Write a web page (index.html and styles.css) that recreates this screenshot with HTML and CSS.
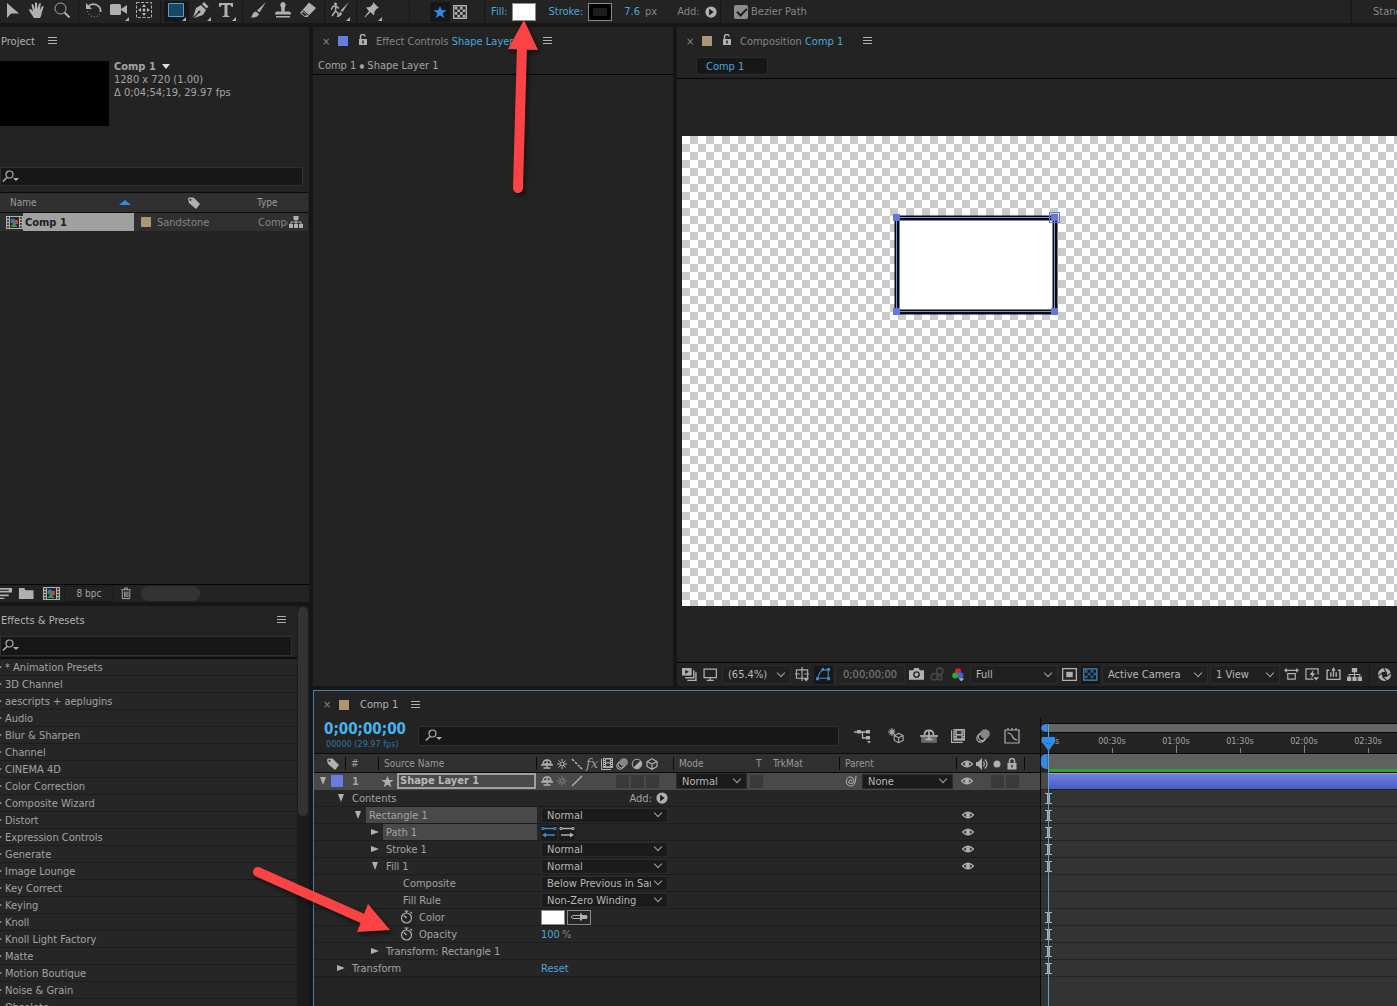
FILE: index.html
```html
<!DOCTYPE html>
<html lang="en">
<head>
<meta charset="utf-8">
<title>Comp 1</title>
<link rel="stylesheet" href="styles.css">
</head>
<body>
<svg class="defs" aria-hidden="true">
  <symbol id="i-select" viewBox="0 0 16 16"><path d="M3 1v15l4-4.500h8z"/></symbol>
  <symbol id="i-hand" viewBox="0 0 16 16"><path d="M5 16 1 10 0 7.500q1-1.200 2.200 0L4 9.500 2.500 3q.6-1.600 1.900-.3L6 7.500 6 1q1-1.600 2 0l.4 6L10 1.500q1.200-1.100 1.900.2L10.800 8l2.300-3.800q1.400-.6 1.500.8L13 10l-1 4-1 2z"/></symbol>
  <symbol id="i-zoom" viewBox="0 0 16 16"><circle cx="6.500" cy="6.500" r="5.500" class="line"/><path d="m10.500 10.500 5 5" class="line" stroke-width="2"/></symbol>
  <symbol id="i-rotate" viewBox="0 0 16 16"><path d="M2 5a7 7 0 0 1 12.500 5" class="line" stroke-width="1.800"/><path d="M14 12a7 7 0 0 1-12.500-3" class="line" stroke-dasharray="1 2"/><path d="M0 1v6h6z"/></symbol>
  <symbol id="i-camera" viewBox="0 0 18 16"><rect y="2" width="11" height="11" rx="1.500"/><path d="m11 7 6-4v9l-6-4z"/></symbol>
  <symbol id="i-pan" viewBox="0 0 16 16"><path d="M.5.5h15v15H.5z" class="line" stroke-dasharray="3 1.500"/><path d="M8 2 6 5h4zM8 14l-2-3h4zM2 8l3-2v4zM14 8l-3-2v4z"/><circle cx="8" cy="8" r="1.500"/></symbol>
  <symbol id="i-rect" viewBox="0 0 16 16"><path d="M.5 1.500h15v13H.5z" fill="#1a4763" stroke="#4f9fd2"/></symbol>
  <symbol id="i-pen" viewBox="0 0 16 16"><path d="M0 15.500 3 6l5-3 5 5-3 5-9 3 5-5a1.200 1.200 0 1 0-1-1zM9 2l2-2 4.500 4.500-2 2z"/></symbol>
  <symbol id="i-text" viewBox="0 0 16 16"><path d="M1 1h14v4h-1.500q-.2-2-2-2H9.500v10q0 1 2 1V15h-7v-1q2 0 2-1V3h-2q-1.800 0-2 2H1z"/></symbol>
  <symbol id="i-brush" viewBox="0 0 16 16"><path d="M16 0 9.500 10.500 7 8.500zM6 9.500l3 2.500q-1 4-9 3.500 2-.5 2.500-3T6 9.500z"/></symbol>
  <symbol id="i-stamp" viewBox="0 0 16 16"><path d="M8 0a3 3 0 0 1 2 5l-.5 4.500H14q2 0 2 3H0q0-3 2-3h4.500L6 5a3 3 0 0 1 2-5zM1 14h14v1.500H1z"/></symbol>
  <symbol id="i-eraser" viewBox="0 0 16 16"><path d="M9 0.500 16 6 7.500 15H5L0 11z"/><path d="m3 8.500 6 5" stroke="#232323"/><path d="M1.500 11 5 14l2-1-4-3z" fill="#232323"/></symbol>
  <symbol id="i-roto" viewBox="0 0 18 16"><circle cx="4.500" cy="2" r="1.500"/><path d="M0 8l2-3.500 3-.5 3 2.500M5 4 4.500 9 7 11v4M4.500 9 1 14" class="line" stroke-width="1.500"/><path d="M18 0l-6.500 10L9.500 8.500zM9 9.500l2 2Q10 15 5 15q3-1 4-5.500z"/></symbol>
  <symbol id="i-pin" viewBox="0 0 16 16"><path d="m9 0 6 6-2 .5-2.500 3-.5 4-3.500-3.500L1 15.500.5 15 5 9 2 5.500l4-.5 3-3z"/></symbol>
  <symbol id="i-star" viewBox="0 0 16 16"><path d="m8 1 2 5h5.500L11 9.500l1.800 5.500L8 11.700 3.200 15 5 9.500.5 6H6z"/></symbol>
  <symbol id="i-checker" viewBox="0 0 16 16"><path d="M.8.8h14.400v14.400H.8z" class="line" stroke-width="1.600"/><path d="M2 2h3v3H2zM8 2h3v3H8zM5 5h3v3H5zM11 5h3v3h-3zM2 8h3v3H2zM8 8h3v3H8zM5 11h3v3H5zM11 11h3v3h-3z"/></symbol>
  <symbol id="i-play" viewBox="0 0 16 16"><circle cx="8" cy="8" r="7.500"/><path d="M5.500 3.500v9l6-4.500z" fill="#1b1b1b"/></symbol>
  <symbol id="i-menu" viewBox="0 0 10 10"><path d="M0 1.500h9M0 4.500h9M0 7.500h9" class="line"/></symbol>
  <symbol id="i-unlock" viewBox="0 0 10 12"><path d="M2.500 6V3a2 2 0 0 1 4.500-.5" class="line" stroke-width="1.500"/><path d="M1 5h8v6H1z"/><path d="M5 6.500v3" stroke="#232323" stroke-width="1.500"/></symbol>
  <symbol id="i-search" viewBox="0 0 18 14"><circle cx="7.500" cy="4.500" r="3.500" class="line" stroke-width="1.200"/><path d="M5 7.500.8 11.500" class="line" stroke-width="1.500"/><path d="M11 8h6l-3 3z"/></symbol>
  <symbol id="i-tag" viewBox="0 0 12 12"><path d="M0 2q0-1.500 1.500-1.500h4L12 7 8 12 1 6z"/><circle cx="2.500" cy="2.800" r="1.100" fill="#323232"/></symbol>
  <symbol id="i-comp" viewBox="0 0 17 13"><path d="M0 0h17v13H0z"/><path d="M1 2h2M1 5h2M1 8h2M1 11h2M14 2h2M14 5h2M14 8h2M14 11h2" stroke="#232323" stroke-width="1.500"/><path d="M4 1h9v11H4z" fill="#282828"/><circle cx="7" cy="5" r="2.500" fill="#2f78c4"/><path d="M8 4h4v4H8z" fill="#bb4a3b"/><path d="m8 6 3.500 5h-7z" fill="#3b9444"/></symbol>
  <symbol id="i-flow" viewBox="0 0 14 14"><path d="M4.500 1h5v4h-5zM0 9h4v4H0zM5 9h4v4H5zM10 9h4v4h-4z"/><path d="M7 5v4M2 9V7h10v2" class="line"/></symbol>
  <symbol id="i-interpret" viewBox="0 0 14 12"><path d="M0 1h13v4H0zM0 7h10v1.500H0zM0 10h6v1H0z"/><path d="M2 3h8" stroke="#232323"/></symbol>
  <symbol id="i-folder" viewBox="0 0 14 12"><path d="M0 1h5l1 2h7.500v8H0z"/></symbol>
  <symbol id="i-trash" viewBox="0 0 12 14"><path d="M0 3h11M4 3V1h3v2M1.500 4v8.500h8V4M4 5v6M5.500 5v6M7.500 5v6" class="line"/></symbol>
  <symbol id="i-eye" viewBox="0 0 12 8"><path d="M.5 4Q6-1.500 11.500 4 6 9.500.5 4z" class="line" stroke-width="1.200"/><circle cx="6" cy="4" r="2.200"/></symbol>
  <symbol id="i-audio" viewBox="0 0 12 12"><path d="M0 4h2l4-4v12L2 8H0z"/><path d="M7.500 3.500q1.500 2.500 0 5M9 1.500q4 4.500 0 9" class="line" stroke-width="1.200"/></symbol>
  <symbol id="i-dot" viewBox="0 0 12 12"><circle cx="6" cy="6" r="3.500"/></symbol>
  <symbol id="i-lock" viewBox="0 0 12 12"><path d="M3.500 6V3a2.500 2.500 0 0 1 5 0v3" class="line" stroke-width="1.500"/><path d="M1.500 5h9v6.500h-9z"/><path d="M6 7v2.500" stroke="#323232" stroke-width="1.500"/></symbol>
  <symbol id="i-shy" viewBox="0 0 12 12"><path d="M2 6q0-4 4-4t4 4z" class="line" stroke-width="1.300"/><path d="M0 7h12M6 2v8M2.500 10h7" class="line" stroke-width="1.300"/></symbol>
  <symbol id="i-sun" viewBox="0 0 12 12"><circle cx="6" cy="6" r="2" class="line" stroke-width="1.200"/><path d="M6 1v2M6 9v2M1 6h2M9 6h2M2.500 2.500 4 4M8 8l1.500 1.500M9.500 2.500 8 4M4 8 2.500 9.500" class="line"/></symbol>
  <symbol id="i-quality" viewBox="0 0 12 12"><path d="M1 1l2 2M4 4l2 2M7 7l1.500 1.500M9 9l2 2" class="line" stroke-width="1.600"/></symbol>
  <symbol id="i-slash" viewBox="0 0 12 12"><path d="M1 11 11 1" class="line" stroke-width="1.400"/></symbol>
  <symbol id="i-frames" viewBox="0 0 12 12"><path d="M.5 1v10.500H10" class="line"/><path d="M2 0h10v10H2z"/><path d="M5 1.500h4v2.700H5zM5 5.500h4v2.700H5z" fill="#303030"/><path d="M3.500 1v8M10.500 1v8" stroke="#303030" stroke-dasharray="1 1"/></symbol>
  <symbol id="i-blur" viewBox="0 0 12 12"><circle cx="4" cy="8" r="3.300" class="line"/><circle cx="5.500" cy="6.500" r="3.500" class="line"/><circle cx="7.800" cy="4.200" r="4" fill="#868686"/></symbol>
  <symbol id="i-adjust" viewBox="0 0 12 12"><circle cx="6" cy="6" r="4.800" class="line"/><path d="M9.500 2.500a5 5 0 0 1-7 7z"/></symbol>
  <symbol id="i-cube" viewBox="0 0 12 12"><path d="m6 .8 5 2.700v5L6 11.200 1 8.500v-5zM1 3.500 6 6l5-2.500M6 6v5" class="line" stroke-width="1.200"/></symbol>
  <symbol id="i-whip" viewBox="0 0 12 12"><path d="M6 6.500q1.500-.5.500-1.500T4 6t1.500 2.500T9 6 6 2 1.500 5.500 5.500 11 11 1" class="line"/></symbol>
  <symbol id="i-watch" viewBox="0 0 12 14"><circle cx="6" cy="8" r="5" class="line" stroke-width="1.200"/><path d="M4 1h4M6 1v2M10 2l1.500 1.500M6 8 3.500 5.500" class="line" stroke-width="1.200"/></symbol>
  <symbol id="i-right" viewBox="0 0 8 8"><path d="M0 1v6l8-3z"/></symbol>
  <symbol id="i-down" viewBox="0 0 8 8"><path d="M1 0h6L4 8z"/></symbol>
  <symbol id="i-path" viewBox="0 0 16 12"><path d="M3 2.500h10M2 9h11" class="line" stroke-width="1.300"/><path d="M1 1.500h2v2H1zM13 1.500h2v2h-2z" class="line"/><path d="m11 6.500 4 2.500-4 2.500z"/></symbol>
  <symbol id="i-dropper" viewBox="0 0 18 8"><path d="M1 4q1-1.500 3-1.500h7v3H4Q2 5.500 1 4z" class="line"/><path d="M10 .5h2V2h4q1.500 0 1.500 2T16 6h-4v1.500h-2z"/></symbol>
  <symbol id="i-always" viewBox="0 0 14 14"><path d="M0 1h9v7H0z"/><path d="M3 2.500v4l3.500-2z" fill="#232323"/><path d="M11 3v7H3M13 5v7.500H5" class="line" stroke-width="1.300"/></symbol>
  <symbol id="i-monitor" viewBox="0 0 14 14"><path d="M1 2h11.500v8H1zM6.700 10v2M3.500 12.500h6.500" class="line" stroke-width="1.200"/></symbol>
  <symbol id="i-guides" viewBox="0 0 16 16"><path d="M1.500 3h12v9h-12zM7.500 0v15M0 7.500h5M10 7.500h5" class="line" stroke-width="1.200"/><path d="M9 12h6l-3 3.500z"/></symbol>
  <symbol id="i-mask" viewBox="0 0 16 14"><path d="M2 11q1-6 5-9h6v9z" class="line" stroke-width="1.200"/><path d="M0 10h3v3H0zM6 0h2.500v3H6zM12 0h3v3h-3zM12 10h3v3h-3z"/></symbol>
  <symbol id="i-photo" viewBox="0 0 14 14"><path d="M0 3h4l1-2h4l1 2h4v9H0z"/><circle cx="7" cy="7" r="2.500" fill="none" stroke="#232323" stroke-width="1.300"/></symbol>
  <symbol id="i-shown" viewBox="0 0 14 14"><circle cx="9" cy="4" r="3" class="line" stroke-width="1.500"/><circle cx="4" cy="9" r="3" class="line" stroke-width="1.500"/><circle cx="9" cy="10" r="2" class="line" stroke-width="1.500"/></symbol>
  <symbol id="i-rgb" viewBox="0 0 14 16"><circle cx="6.500" cy="4.500" r="3.200" fill="#e81e1e"/><circle cx="3.500" cy="9" r="3.200" fill="#25b02a"/><circle cx="9" cy="9" r="3.200" fill="#3c62ea"/><path d="M7 12h6l-3 3.500z"/></symbol>
  <symbol id="i-roi" viewBox="0 0 14 14"><path d="M.6 1.600h12.800v10.800H.6z" class="line" stroke-width="1.200"/><path d="M4 4.500h6v5H4z"/></symbol>
  <symbol id="i-grid" viewBox="0 0 16 14"><path d="M.8 1h14v12H.8z" class="line" stroke-width="1.300"/><path d="M2 2h3v3H2zM8 2h3v3H8zM5 5h3v3H5zM11 5h3v3h-3zM2 8h3v3H2zM8 8h3v3H8z" opacity=".6"/></symbol>
  <symbol id="i-pixel" viewBox="0 0 16 14"><path d="M1 2.500h14M4 6h8v6H4z" class="line" stroke-width="1.300"/><path d="M0 2.500 3 0v5zM16 2.500 13 0v5z"/></symbol>
  <symbol id="i-fast" viewBox="0 0 16 14"><path d="M14 7V1H1v11h8" class="line" stroke-width="1.300"/><path d="M9 2 5 7.500h2.500L6.500 11 11 6H8.500zM9 10h6l-3 3.500z"/></symbol>
  <symbol id="i-levels" viewBox="0 0 14 14"><path d="M3 3H1v8.500h12V3h-2M4.500 5v4M7 2v7M9.500 5v4" class="line" stroke-width="1.300"/><path d="M5 3.500 7 0l2 3.500z"/></symbol>
  <symbol id="i-shutter" viewBox="0 0 14 14"><circle cx="7" cy="7" r="4.300" class="line" stroke-width="3.600"/><path d="M6 0 9 6M14 5 8.500 9M10 13.500 5 9M0 9l5.500-4" stroke="#232323"/></symbol>
  <symbol id="i-mini" viewBox="0 0 18 16"><path d="M0 4h13M8.500 4v6H13" class="line" stroke-width="1.300"/><path d="M3 2h4v3.500H3zM12 2h4v3.500h-4zM12 8h4v3.500h-4zM13 13h4l-2 2.500z"/></symbol>
  <symbol id="i-draft" viewBox="0 0 18 18"><path d="m12 6 5 2.500v5.500l-5 2.500-5-2.500V8.500zM7 8.500l5 2.500 5-2.500M12 11v5.500M4.500 0v9M0 4.500h8M1.500 1.500l6 6M7.500 1.500l-6 6" class="line" stroke-width="1.200"/></symbol>
  <symbol id="i-shybig" viewBox="0 0 16 14"><path d="M1 6h14v7H1z" fill="#6b6b6b"/><path d="M4 6q0-4 4-4t4 4M0 7h16M8 2v8M5 10h6" class="line" stroke-width="1.500"/></symbol>
  <symbol id="i-graph" viewBox="0 0 16 16"><path d="M1 2h14v13H1zM4 0v2M8 0v2M12 0v2M3.500 5Q7 5 8.500 8.500t5 3.500" class="line" stroke-width="1.200"/></symbol>
</svg>

<header class="toolbar">
  <button class="tool" aria-label="Selection"><svg><use href="#i-select"/></svg></button>
  <button class="tool" aria-label="Hand"><svg><use href="#i-hand"/></svg></button>
  <button class="tool" aria-label="Zoom"><svg><use href="#i-zoom"/></svg></button>
  <i class="sep"></i>
  <button class="tool" aria-label="Rotation"><svg><use href="#i-rotate"/></svg></button>
  <button class="tool more" aria-label="Camera"><svg><use href="#i-camera"/></svg></button>
  <button class="tool" aria-label="Pan behind"><svg><use href="#i-pan"/></svg></button>
  <i class="sep"></i>
  <button class="tool more active" aria-label="Rectangle"><svg><use href="#i-rect"/></svg></button>
  <button class="tool more" aria-label="Pen"><svg><use href="#i-pen"/></svg></button>
  <button class="tool more" aria-label="Type"><svg><use href="#i-text"/></svg></button>
  <i class="sep"></i>
  <button class="tool" aria-label="Brush"><svg><use href="#i-brush"/></svg></button>
  <button class="tool" aria-label="Clone stamp"><svg><use href="#i-stamp"/></svg></button>
  <button class="tool" aria-label="Eraser"><svg><use href="#i-eraser"/></svg></button>
  <i class="sep"></i>
  <button class="tool more" aria-label="Roto brush"><svg><use href="#i-roto"/></svg></button>
  <i class="sep"></i>
  <button class="tool more" aria-label="Puppet pin"><svg><use href="#i-pin"/></svg></button>
  <i class="sep wide"></i>
  <button class="mode active" aria-label="Creates shape"><svg><use href="#i-star"/></svg></button>
  <button class="mode" aria-label="Creates mask"><svg><use href="#i-checker"/></svg></button>
  <i class="sep mid"></i>
  <div class="opts">
    <span class="opt"><a href="#fill">Fill:</a><button class="swatch" aria-label="Fill color"></button></span>
    <span class="opt stroke"><a href="#stroke">Stroke:</a><button class="swatch black" aria-label="Stroke color"></button></span>
    <span class="opt width"><a href="#width">7.6</a><span>px</span></span>
    <span class="opt add">Add: <button class="icon" aria-label="Add"><svg><use href="#i-play"/></svg></button></span>
  </div>
  <i class="sep"></i>
  <label class="bezier"><input type="checkbox" checked>Bezier Path</label>
  <div class="workspaces">Standard</div>
</header>

<div class="workspace">
  <aside class="sidebar">
    <section class="panel project">
      <h2 class="tab">Project <button class="icon" aria-label="Panel menu"><svg><use href="#i-menu"/></svg></button></h2>
      <div class="preview">
        <div class="thumb"></div>
        <div class="info">
          <strong>Comp 1</strong>
          <span>1280 x 720 (1.00)</span>
          <span>Δ 0;04;54;19, 29.97 fps</span>
        </div>
      </div>
      <label class="search"><svg><use href="#i-search"/></svg><input type="text" aria-label="Search project"></label>
      <table class="items">
        <thead>
          <tr><th class="c-name">Name<i class="sort"></i></th><th class="c-label"><svg><use href="#i-tag"/></svg></th><th class="c-type">Type</th></tr>
        </thead>
        <tbody>
          <tr>
            <td class="c-name"><div class="item"><svg><use href="#i-comp"/></svg><b>Comp 1</b></div></td>
            <td><div class="item"><i class="chip sand"></i>Sandstone</div></td>
            <td class="c-type"><div class="item"><span class="clip">Composition</span><svg class="flow"><use href="#i-flow"/></svg></div></td>
          </tr>
        </tbody>
      </table>
      <div class="foot">
        <button class="icon" aria-label="Interpret"><svg><use href="#i-interpret"/></svg></button>
        <button class="icon" aria-label="New folder"><svg><use href="#i-folder"/></svg></button>
        <button class="icon" aria-label="New composition"><svg><use href="#i-comp"/></svg></button>
        <button class="bpc">8 bpc</button>
        <button class="icon" aria-label="Delete"><svg><use href="#i-trash"/></svg></button>
        <i class="hscroll"></i>
      </div>
    </section>

    <section class="panel effects">
      <div class="effects-main">
        <h2 class="tab">Effects &amp; Presets <button class="icon" aria-label="Panel menu"><svg><use href="#i-menu"/></svg></button></h2>
        <label class="search"><svg><use href="#i-search"/></svg><input type="text" aria-label="Search effects"></label>
        <ul class="list">
          <li>* Animation Presets</li>
          <li>3D Channel</li>
          <li>aescripts + aeplugins</li>
          <li>Audio</li>
          <li>Blur &amp; Sharpen</li>
          <li>Channel</li>
          <li>CINEMA 4D</li>
          <li>Color Correction</li>
          <li>Composite Wizard</li>
          <li>Distort</li>
          <li>Expression Controls</li>
          <li>Generate</li>
          <li>Image Lounge</li>
          <li>Key Correct</li>
          <li>Keying</li>
          <li>Knoll</li>
          <li>Knoll Light Factory</li>
          <li>Matte</li>
          <li>Motion Boutique</li>
          <li>Noise &amp; Grain</li>
          <li>Obsolete</li>
        </ul>
      </div>
      <div class="vscroll"><i></i></div>
    </section>
  </aside>

  <main class="main">
    <div class="upper">
      <section class="panel controls">
        <h2 class="tab"><span class="x">×</span><i class="chip blue"></i><svg class="lock"><use href="#i-unlock"/></svg><span class="dim">Effect Controls <a href="#layer">Shape Layer 1</a></span><button class="icon" aria-label="Panel menu"><svg><use href="#i-menu"/></svg></button></h2>
        <p class="crumb">Comp 1 <small>●</small> Shape Layer 1</p>
      </section>

      <section class="panel viewer">
        <h2 class="tab"><span class="x">×</span><i class="chip sand"></i><svg class="lock"><use href="#i-unlock"/></svg><span class="dim">Composition <a href="#comp">Comp 1</a></span><button class="icon" aria-label="Panel menu"><svg><use href="#i-menu"/></svg></button></h2>
        <nav class="comps"><button>Comp 1</button></nav>
        <div class="stage">
          <div class="canvas">
            <svg class="shape" viewBox="0 0 168 106">
              <rect x="5" y="7" width="158" height="94" fill="#fff" stroke="#0a0a14" stroke-width="5"/>
              <rect x="4.500" y="6.500" width="158" height="94" fill="none" stroke="#7f93dc"/>
              <path d="M1 3h7v7H1zM159 3h7v7h-7zM1 97h7v7H1zM159 97h7v7h-7z" fill="#6378d8"/>
              <rect x="157.500" y="1.500" width="10" height="10" fill="none" stroke="#6378d8"/>
            </svg>
          </div>
        </div>
        <div class="foot">
          <button class="icon" aria-label="Always preview"><svg><use href="#i-always"/></svg></button>
          <button class="icon" aria-label="Primary viewer"><svg><use href="#i-monitor"/></svg></button>
          <span class="drop w-zoom"><select aria-label="Magnification"><option>(65.4%)</option></select></span>
          <button class="icon" aria-label="Guides"><svg><use href="#i-guides"/></svg></button>
          <button class="icon on" aria-label="Mask visibility"><svg><use href="#i-mask"/></svg></button>
          <button class="time">0;00;00;00</button>
          <button class="icon" aria-label="Snapshot"><svg><use href="#i-photo"/></svg></button>
          <button class="icon off" aria-label="Show snapshot"><svg><use href="#i-shown"/></svg></button>
          <button class="icon" aria-label="Channels"><svg><use href="#i-rgb"/></svg></button>
          <span class="drop w-res"><select aria-label="Resolution"><option>Full</option></select></span>
          <button class="icon" aria-label="Region of interest"><svg><use href="#i-roi"/></svg></button>
          <button class="icon on" aria-label="Transparency grid"><svg><use href="#i-grid"/></svg></button>
          <span class="drop w-cam"><select aria-label="3D view"><option>Active Camera</option></select></span>
          <span class="drop w-view"><select aria-label="View layout"><option>1 View</option></select></span>
          <button class="icon" aria-label="Pixel aspect"><svg><use href="#i-pixel"/></svg></button>
          <button class="icon" aria-label="Fast previews"><svg><use href="#i-fast"/></svg></button>
          <button class="icon" aria-label="Timeline"><svg><use href="#i-levels"/></svg></button>
          <button class="icon" aria-label="Flowchart"><svg><use href="#i-flow"/></svg></button>
          <i class="sep"></i>
          <button class="icon" aria-label="Exposure"><svg><use href="#i-shutter"/></svg></button>
        </div>
      </section>
    </div>

    <section class="panel timeline">
      <h2 class="tab"><span class="x">×</span><i class="chip sand"></i><span>Comp 1</span><button class="icon" aria-label="Panel menu"><svg><use href="#i-menu"/></svg></button></h2>
      <div class="time-body">
        <div class="layers">
          <div class="time-head">
            <div class="clock"><strong>0;00;00;00</strong><span>00000 (29.97 fps)</span></div>
            <label class="search"><svg><use href="#i-search"/></svg><input type="text" aria-label="Search layers"></label>
            <div class="switches">
              <button class="icon" aria-label="Mini flowchart"><svg><use href="#i-mini"/></svg></button>
              <button class="icon" aria-label="Draft 3D"><svg><use href="#i-draft"/></svg></button>
              <button class="icon" aria-label="Hide shy layers"><svg><use href="#i-shybig"/></svg></button>
              <button class="icon small" aria-label="Frame blending"><svg><use href="#i-frames"/></svg></button>
              <button class="icon small" aria-label="Motion blur"><svg><use href="#i-blur"/></svg></button>
              <button class="icon" aria-label="Graph editor"><svg><use href="#i-graph"/></svg></button>
            </div>
          </div>

          <div class="cols head">
            <span class="tagcell"><svg><use href="#i-tag"/></svg></span>
            <span>#</span>
            <span>Source Name</span>
            <span class="sw"><svg><use href="#i-shy"/></svg><svg><use href="#i-sun"/></svg><svg><use href="#i-quality"/></svg><em>fx</em><svg><use href="#i-frames"/></svg><svg><use href="#i-blur"/></svg><svg><use href="#i-adjust"/></svg><svg><use href="#i-cube"/></svg></span>
            <span>Mode</span>
            <span class="plain">T</span>
            <span class="plain">TrkMat</span>
            <span>Parent</span>
            <span class="sw"><svg><use href="#i-eye"/></svg><svg><use href="#i-audio"/></svg><svg><use href="#i-dot"/></svg><svg><use href="#i-lock"/></svg></span>
            <span></span>
          </div>

          <div class="cols layer">
            <span class="lead"><button class="twisty" aria-label="Collapse"><svg><use href="#i-down"/></svg></button><i class="chip blue"></i></span>
            <span class="num">1</span>
            <span class="lname"><svg><use href="#i-star"/></svg><b>Shape Layer 1</b></span>
            <span class="sw"><svg><use href="#i-shy"/></svg><svg class="faint"><use href="#i-sun"/></svg><svg><use href="#i-slash"/></svg><i></i><i></i><i class="box"></i><i class="box"></i><i class="box"></i></span>
            <span class="drop w-mode"><select aria-label="Blend mode"><option>Normal</option></select></span>
            <span><i class="box"></i></span>
            <span></span>
            <span class="parent"><svg><use href="#i-whip"/></svg><span class="drop"><select aria-label="Parent"><option>None</option></select></span></span>
            <span class="sw"><svg><use href="#i-eye"/></svg><i></i><i class="box"></i><i class="box"></i></span>
            <span></span>
          </div>

          <div class="prop d1">
            <div class="pname"><button class="twisty" aria-label="Collapse"><svg><use href="#i-down"/></svg></button><span>Contents</span></div>
            <div class="pval end">Add: <button class="icon" aria-label="Add"><svg><use href="#i-play"/></svg></button></div>
          </div>
          <div class="prop d2 selected">
            <div class="pname"><button class="twisty" aria-label="Collapse"><svg><use href="#i-down"/></svg></button><span>Rectangle 1</span></div>
            <div class="pval"><span class="drop"><select aria-label="Rectangle mode"><option>Normal</option></select></span></div>
            <svg class="eye"><use href="#i-eye"/></svg>
          </div>
          <div class="prop d3 selected">
            <div class="pname"><button class="twisty" aria-label="Expand"><svg><use href="#i-right"/></svg></button><span>Path 1</span></div>
            <div class="pval"><button class="dir rev" aria-label="Reverse path"><svg><use href="#i-path"/></svg></button><button class="dir" aria-label="Forward path"><svg><use href="#i-path"/></svg></button></div>
            <svg class="eye"><use href="#i-eye"/></svg>
          </div>
          <div class="prop d3">
            <div class="pname"><button class="twisty" aria-label="Expand"><svg><use href="#i-right"/></svg></button><span>Stroke 1</span></div>
            <div class="pval"><span class="drop"><select aria-label="Stroke mode"><option>Normal</option></select></span></div>
            <svg class="eye"><use href="#i-eye"/></svg>
          </div>
          <div class="prop d3">
            <div class="pname"><button class="twisty" aria-label="Collapse"><svg><use href="#i-down"/></svg></button><span>Fill 1</span></div>
            <div class="pval"><span class="drop"><select aria-label="Fill mode"><option>Normal</option></select></span></div>
            <svg class="eye"><use href="#i-eye"/></svg>
          </div>
          <div class="prop d4">
            <div class="pname"><span>Composite</span></div>
            <div class="pval"><span class="drop"><select aria-label="Composite"><option>Below Previous in Same Group</option></select></span></div>
          </div>
          <div class="prop d4">
            <div class="pname"><span>Fill Rule</span></div>
            <div class="pval"><span class="drop"><select aria-label="Fill rule"><option>Non-Zero Winding</option></select></span></div>
          </div>
          <div class="prop d4">
            <div class="pname"><svg class="watch"><use href="#i-watch"/></svg><span>Color</span></div>
            <div class="pval"><button class="swatch" aria-label="Color"></button><button class="dropper" aria-label="Eyedropper"><svg><use href="#i-dropper"/></svg></button></div>
          </div>
          <div class="prop d4">
            <div class="pname"><svg class="watch"><use href="#i-watch"/></svg><span>Opacity</span></div>
            <div class="pval"><a href="#opacity">100</a><span class="dim">%</span></div>
          </div>
          <div class="prop d3">
            <div class="pname"><button class="twisty" aria-label="Expand"><svg><use href="#i-right"/></svg></button><span>Transform: Rectangle 1</span></div>
          </div>
          <div class="prop d1">
            <div class="pname"><button class="twisty" aria-label="Expand"><svg><use href="#i-right"/></svg></button><span>Transform</span></div>
            <div class="pval"><a href="#reset">Reset</a></div>
          </div>
        </div>

        <div class="tracks">
          <div class="navigator"></div>
          <div class="ruler">
            <span>0:00s</span><span>00:30s</span><span>01:00s</span><span>01:30s</span><span>02:00s</span><span>02:30s</span>
          </div>
          <div class="workarea"></div>
          <div class="cache"></div>
          <div class="track first"><div class="bar"></div></div>
          <div class="track beam"></div>
          <div class="track beam"></div>
          <div class="track beam"></div>
          <div class="track beam"></div>
          <div class="track beam"></div>
          <div class="track"></div>
          <div class="track"></div>
          <div class="track beam"></div>
          <div class="track beam"></div>
          <div class="track beam"></div>
          <div class="track beam"></div>
          <div class="playhead"><svg viewBox="0 0 13 14"><path d="M0 0h13v5L6.500 14 0 5z" fill="#2d8ceb"/><path d="M5 6h1v1H5zM7 6h1v1H7z" fill="#163a5c"/></svg></div>
        </div>
      </div>
    </section>
  </main>
</div>

<!-- tutorial arrows, drawn over everything -->
<svg class="arrows" width="560" height="960" aria-hidden="true">
  <path d="M518 188 522 45" stroke="#fc4343" stroke-width="10" stroke-linecap="round"/>
  <path d="M524 20 538 50 508 49z" fill="#fc4343"/>
  <path d="M258 872 366 920" stroke="#fc4343" stroke-width="10" stroke-linecap="round"/>
  <path d="M390 930 357 932 368 904z" fill="#fc4343"/>
</svg>
</body>
</html>
```

FILE: styles.css
```css
* {
  box-sizing: border-box;
}

body {
  margin: 0;
  height: 100vh;
  overflow: hidden;
  display: flex;
  flex-direction: column;
  background: #161616;
  color: #a3a3a3;
  font: 11px/13px "DejaVu Sans Condensed", "DejaVu Sans", sans-serif;
}

svg {
  display: block;
  flex: none;
  width: 16px;
  height: 16px;
  color: #b0b0b0;
  fill: currentColor;
}

.line {
  fill: none;
  stroke: currentColor;
}

.defs {
  position: absolute;
  width: 0;
  height: 0;
}

button, input, select {
  font: inherit;
  color: inherit;
  background: none;
  border: 0;
  margin: 0;
  padding: 0;
  outline: 0;
}

a {
  color: #49a8d8;
  text-decoration: none;
}

h2, p, ul {
  margin: 0;
  padding: 0;
  font-size: 11px;
  font-weight: normal;
}

.icon {
  display: flex;
  align-items: center;
  justify-content: center;
  flex: none;
}

.dim {
  color: #858585;
}

.chip {
  flex: none;
  width: 10px;
  height: 10px;
}

.sand { background: #a99776; }
.blue { background: #6b7ce0; }

/* toolbar */
.toolbar {
  display: flex;
  align-items: center;
  flex: none;
  height: 23px;
  background: #232323;
  white-space: nowrap;
  color: #858585;
}

.tool {
  position: relative;
  display: flex;
  justify-content: center;
  align-items: center;
  flex: none;
  width: 25px;
  height: 21px;
  padding: 0 2px 3px 0;
}

.tool svg {
  width: 18px;
}

.active {
  background: #171717;
  border-radius: 2px;
}

.more::after {
  content: "";
  position: absolute;
  right: 3px;
  bottom: 1px;
  border: 2px solid;
  border-color: transparent #b0b0b0 #b0b0b0 transparent;
}

.sep {
  flex: none;
  width: 1px;
  height: 22px;
  margin: 0 3px;
  background: #171717;
}

.sep.wide { margin: 0 20px 0 24px; }
.sep.mid { margin: 0 6px 0 14px; }

.mode {
  display: flex;
  align-items: center;
  justify-content: center;
  width: 20px;
  height: 20px;
}

.mode svg { width: 14px; height: 14px; }
.mode.active svg { color: #2d8ceb; }

.opts {
  display: flex;
  width: 226px;
}

.opt {
  display: flex;
  align-items: center;
  gap: 5px;
}

.stroke { margin-left: 12px; }
.width { margin-left: 12px; }
.add { margin-left: 20px; }
.add svg { width: 12px; height: 12px; }

.swatch {
  flex: none;
  width: 24px;
  height: 18px;
  background: #fff;
  border: 1px solid #8c8c8c;
}

.swatch.black {
  background: #1c1c1c;
  box-shadow: inset 0 0 0 4px #000;
}

.bezier {
  display: flex;
  align-items: center;
  gap: 3px;
  margin-left: 10px;
}

.bezier input {
  appearance: none;
  width: 14px;
  height: 14px;
  background: #8c8c8c;
  border-radius: 2px;
}

.bezier input::before {
  content: "";
  display: block;
  width: 8px;
  height: 4px;
  margin: 3px;
  border: solid #1b1b1b;
  border-width: 0 0 2px 2px;
  transform: rotate(-45deg);
}

.workspaces {
  width: 47px;
  margin-left: auto;
  padding: 5px 0 5px 21px;
  border-left: 2px solid #1a1a1a;
  overflow: hidden;
}

/* panels */
.workspace {
  display: flex;
  flex: 1;
  min-height: 0;
  padding-top: 4px;
}

.panel {
  background: #232323;
}

.tab {
  display: flex;
  align-items: center;
  flex: none;
  height: 28px;
  color: #b0b0b0;
  white-space: nowrap;
}

.tab .icon { margin-left: 13px; }
.tab .icon svg { width: 10px; height: 10px; }

.tab .x {
  width: 7px;
  margin: 0 9px;
  color: #858585;
}

.tab .lock {
  width: 10px;
  height: 12px;
  margin: 0 8px 3px 10px;
}

.tab a { color: #49a8d8; }

.search {
  display: flex;
  align-items: center;
  height: 20px;
  padding-left: 1px;
  background: #171717;
  border: 1px solid #303030;
}

.search svg { width: 18px; height: 14px; }

.search input {
  flex: 1;
  min-width: 0;
}

.foot {
  display: flex;
  align-items: center;
  border-top: 1px solid #050505;
}

.sidebar {
  display: flex;
  flex-direction: column;
  flex: none;
  gap: 4px;
  width: 309px;
  margin-right: 4px;
}

.project {
  display: flex;
  flex-direction: column;
  height: 575px;
  flex: none;
}

.project .tab, .effects .tab { padding-left: 1px; }

.preview {
  display: flex;
  gap: 5px;
  padding-top: 5px;
  height: 112px;
}

.thumb {
  width: 109px;
  height: 65px;
  margin-top: 1px;
  background: #000;
}

.info {
  display: flex;
  flex-direction: column;
}

.info strong::after {
  content: "";
  display: inline-block;
  margin: 0 0 1px 6px;
  border: 4px solid transparent;
  border-top: 5px solid #ddd;
  border-bottom: 0;
}

.project .search {
  flex: none;
  width: 303px;
  height: 19px;
}

.items {
  flex: none;
  width: 308px;
  margin-top: 6px;
  border-collapse: collapse;
  table-layout: fixed;
  color: #858585;
}

.items th {
  height: 20px;
  padding: 0 0 0 5px;
  background: #303030;
  border: solid #0a0a0a;
  border-width: 1px 0;
  font-size: 10px;
  font-weight: normal;
  text-align: left;
  color: #9a9a9a;
}

.items th.c-name { padding-left: 10px; }
.items .c-name { width: 134px; }
.items .c-type { width: 56px; }
.items th svg { width: 12px; height: 12px; margin-left: 49px; }

.sort {
  float: right;
  margin: 4px 3px 0 0;
  border: 6px solid transparent;
  border-top: 0;
  border-bottom: 5px solid #2d8ceb;
}

.items td {
  padding: 0;
  background: #2f2f2f;
}

.item {
  display: flex;
  align-items: center;
  height: 18px;
}

.item svg { width: 17px; height: 13px; margin-left: 6px; }

.item b {
  flex: 1;
  padding: 3px 1px 2px 2px;
  background: #a0a0a0;
  color: #1e1e1e;
}

.item .chip { margin: 0 6px 0 7px; }

.item .clip {
  width: 36px;
  padding-left: 6px;
  overflow: hidden;
}

.item svg.flow { width: 14px; height: 14px; margin-left: 1px; }

.project .foot {
  height: 18px;
  margin-top: auto;
}

.project .foot .icon { width: 25px; }
.project .foot .icon:first-child { width: 14px; }
.project .foot svg { width: 17px; height: 13px; }
.project .foot .icon:first-child svg { margin-left: -4px; }

.bpc {
  width: 50px;
  height: 16px;
  border: 1px solid #1a1a1a;
  font-size: 10px;
}

.hscroll {
  width: 59px;
  height: 15px;
  margin-left: 2px;
  border-radius: 8px;
  background: #333;
}

.effects {
  display: flex;
  flex: 1;
  min-height: 0;
}

.effects-main {
  display: flex;
  flex-direction: column;
  flex: 1;
}

.effects .tab .icon { margin: 0 10px 0 auto; }

.effects .search {
  width: 292px;
  margin: 2px 0 1px;
}

.list {
  flex: 1;
  overflow: hidden;
  border-top: 2px solid #0e0e0e;
  list-style: none;
}

.list li {
  position: relative;
  height: 17px;
  padding: 2px 0 0 5px;
  background: #262626;
  border-bottom: 1px solid #1c1c1c;
}

.list li::before {
  content: "";
  position: absolute;
  left: -2px;
  top: 6px;
  border: 2px solid transparent;
  border-left: 4px solid #a3a3a3;
  border-right: 0;
}

.vscroll {
  width: 12px;
  background: #1c1c1c;
}

.vscroll i {
  display: block;
  width: 10px;
  height: 209px;
  margin: 1px;
  border-radius: 5px;
  background: #333;
}

.main {
  display: flex;
  flex-direction: column;
  flex: 1;
  min-width: 0;
  gap: 4px;
}

.upper {
  display: flex;
  flex: 1;
  min-height: 0;
  gap: 4px;
}

.controls {
  width: 360px;
  flex: none;
}

.crumb {
  padding: 4px 5px 2px;
  border-bottom: 1px solid #050505;
}

.crumb small {
  font-size: 6px;
  vertical-align: 1px;
}

.viewer {
  display: flex;
  flex-direction: column;
  flex: 1;
  min-width: 0;
}

.comps {
  height: 24px;
  padding: 2px 0 0 19px;
  border-bottom: 1px solid #050505;
}

.comps button {
  width: 72px;
  height: 18px;
  padding-left: 9px;
  text-align: left;
  background: #171717;
  border: 1px solid #2c2c2c;
  border-radius: 3px;
  color: #49a8d8;
}

.stage {
  display: flex;
  align-items: center;
  flex: 1;
  min-height: 0;
  padding-left: 5px;
  overflow: hidden;
}

.canvas {
  position: relative;
  flex: none;
  width: 837px;
  height: 470px;
  background: conic-gradient(#cbcbcb 25%, #fff 0 50%, #cbcbcb 0 75%, #fff 0) 0 0 / 16px 16px;
}

.shape {
  position: absolute;
  left: 210px;
  top: 75px;
  width: 168px;
  height: 106px;
}

.viewer .foot {
  flex: none;
  height: 24px;
  gap: 2px;
  padding-left: 3px;
  color: #b0b0b0;
  overflow: hidden;
}

.foot .icon {
  width: 19px;
  height: 18px;
}

.controls .tab .icon, .viewer .tab .icon { margin-left: 20px; }
.viewer .foot svg { width: 15px; height: 15px; }
.on { background: #171717; }
.on svg { color: #3a8ed0; }
.off { opacity: .25; }

.time {
  flex: none;
  width: 70px;
  height: 19px;
  border: 1px solid #2c2c2c;
  color: #858585;
}

/* drop-downs */
.drop {
  position: relative;
  display: flex;
  flex: none;
  height: 15px;
  background: #1b1b1b;
  border: 1px solid #2c2c2c;
  color: #b8b8b8;
}

.drop::after {
  content: "";
  position: absolute;
  right: 6px;
  top: 50%;
  width: 5px;
  height: 5px;
  margin-top: -5px;
  border: solid #a3a3a3;
  border-width: 0 1px 1px 0;
  transform: rotate(45deg);
}

.drop select {
  appearance: none;
  width: 100%;
  padding: 0 16px 0 5px;
}

.viewer .drop { height: 19px; background: #202020; }
.w-zoom { width: 69px; }
.w-res { width: 88px; }
.w-cam { width: 106px; }
.w-view { width: 70px; }

/* timeline */
.timeline {
  display: flex;
  flex-direction: column;
  flex: none;
  height: 316px;
  border: solid #3c82b8;
  border-width: 1px 0 0 1px;
}

.timeline .tab { height: 27px; }
.timeline .tab .chip { margin-right: 11px; }

.time-body {
  display: flex;
  flex: 1;
  min-height: 0;
}

.layers {
  flex: none;
  width: 727px;
  border-right: 1px solid #0a0a0a;
}

.time-head {
  display: flex;
  align-items: center;
  height: 35px;
}

.clock {
  display: flex;
  flex-direction: column;
  width: 104px;
  padding-left: 10px;
}

.clock strong {
  font-size: 15px;
  line-height: 17px;
  color: #46b4f0;
}

.clock span {
  font-size: 9px;
  padding-left: 2px;
  color: #2b77ad;
}

.time-head .search {
  width: 421px;
  padding-left: 6px;
}

.switches {
  display: flex;
  align-items: center;
  gap: 15px;
  margin-left: 15px;
}

.switches svg { width: 18px; }
.switches .small { margin: 0 -2px; }
.switches .small svg { width: 14px; height: 14px; }

.cols {
  display: grid;
  grid-template-columns: 31px 33px 158px 137px 77px 17px 72px 117px 68px 1fr;
}

.cols > span {
  display: flex;
  align-items: center;
  min-width: 0;
}

.head {
  height: 20px;
  background: #303030;
  border: solid #0a0a0a;
  border-width: 1px 0;
  font-size: 10px;
  color: #9a9a9a;
}

.head > span {
  padding-left: 5px;
  border-left: 1px solid #0a0a0a;
  margin: 3px 0 4px;
}

.head > .plain, .head > .tagcell { border-color: transparent; }
.head > .tagcell { padding-left: 12px; }
.tagcell svg { width: 12px; height: 12px; }

.cols > .sw { padding-left: 4px; }

.sw > * {
  flex: none;
  width: 12px;
  height: 12px;
  margin-right: 3px;
}

.sw em {
  font: italic 13px/11px "DejaVu Serif", serif;
}

.faint { opacity: .5; }

.layer {
  height: 17px;
  background: #494949;
}

.layer > span { height: 16px; }
.layer > .num { padding-left: 7px; font-weight: bold; }
.layer > .sw { padding-left: 5px; }
.lead .chip { width: 12px; height: 12px; }
.lname svg { width: 13px; height: 13px; margin: 0 3px; }

.lname b {
  flex: 1;
  padding: 0 1px;
  border: 2px solid #a0a0a0;
  line-height: 12px;
  color: #b8b8b8;
}

.layer .w-mode { width: 71px; margin-left: 3px; }
.parent svg { width: 12px; height: 12px; margin: 0 5px 0 6px; }
.parent .drop { width: 91px; }

.layer .box {
  width: 13px;
  height: 13px;
  margin-right: 2px;
  background: #3a3a3a;
}

.twisty {
  display: flex;
  align-items: center;
  justify-content: center;
  flex: none;
  width: 17px;
}

.twisty svg { width: 8px; height: 8px; }

.prop {
  display: grid;
  grid-template-columns: 227px 127px 1fr;
  height: 17px;
  background: #262626;
  border-bottom: 1px solid #1c1c1c;
}

.pname {
  display: flex;
  align-items: center;
  margin-right: 4px;
}

.d1 .pname { padding-left: 18px; }
.d2 .pname { padding-left: 35px; }
.d3 .pname { padding-left: 52px; }
.d4 .pname { padding-left: 86px; }

.pname span {
  flex: 1;
  padding: 2px 3px 1px;
}

.selected .pname span { background: #494949; }

.watch {
  width: 13px;
  height: 14px;
  margin-right: 3px;
}

.pval {
  display: flex;
  align-items: center;
  gap: 2px;
}

.pval .drop { width: 127px; }
.pval.end { justify-content: flex-end; gap: 4px; }
.pval .icon svg { width: 12px; height: 12px; }

.dir {
  width: 16px;
  height: 15px;
  background: #1b1b1b;
}

.dir svg { height: 14px; }
.rev svg { transform: scaleX(-1); color: #3a8ed0; }

.pval .swatch { height: 15px; }

.dropper {
  display: flex;
  align-items: center;
  justify-content: center;
  width: 24px;
  height: 15px;
  border: 1px solid #8c8c8c;
}

.dropper svg { width: 18px; height: 8px; }

.eye {
  width: 12px;
  height: 8px;
  margin: 4px 0 0 294px;
}

.tracks {
  position: relative;
  flex: 1;
  min-width: 0;
  overflow: hidden;
  background: linear-gradient(#232323 54px, #333 0);
}

.navigator {
  height: 10px;
  margin-top: 5px;
  border: solid #0a0a0a;
  border-width: 1px 0;
  background: linear-gradient(90deg, #2d8ceb 6px, #656565 0);
  border-radius: 5px 0 0 5px;
}

.ruler {
  display: flex;
  height: 20px;
  margin-left: -25px;
  font-size: 9px;
}

.ruler span {
  flex: none;
  width: 64px;
  padding-top: 2px;
  text-align: center;
  background: linear-gradient(#858585, #858585) center bottom / 1px 5px no-repeat;
}

.ruler span:nth-child(odd) { background-size: 1px 8px; }

.workarea {
  height: 16px;
  border-top: 1px solid #0a0a0a;
  background: linear-gradient(90deg, #2d8ceb 6px, #606060 0);
  border-radius: 5px 0 0 5px;
}

.cache {
  height: 4px;
  margin-left: 7px;
  border-bottom: 1px solid #0a0a0a;
  background: #28a62d;
}

.track {
  height: 17px;
  border-bottom: 1px solid #232323;
}

.first { background: #494949; }

.bar {
  height: 16px;
  margin-left: 7px;
  border-top: 1px solid #9aa3d8;
  background: linear-gradient(#7080dc, #4a5cc0);
}

.beam { padding-top: 3px; }

.beam::before {
  content: "";
  display: block;
  width: 7px;
  height: 11px;
  margin-left: 4px;
  background:
    linear-gradient(#b0b0b0, #b0b0b0) center / 3px 100% no-repeat,
    linear-gradient(#b0b0b0, #b0b0b0) top / 100% 1px no-repeat,
    linear-gradient(#b0b0b0, #b0b0b0) bottom / 100% 1px no-repeat;
}

.playhead {
  position: absolute;
  left: 7px;
  top: 6px;
  bottom: 0;
  width: 1px;
  background: #4fa8e0;
}

.playhead svg {
  width: 13px;
  height: 14px;
  margin: 13px 0 0 -6px;
}

.arrows {
  position: absolute;
  left: 0;
  top: 0;
  width: 560px;
  height: 960px;
  fill: none;
  pointer-events: none;
  filter: drop-shadow(2px 3px 2px rgba(0, 0, 0, .5));
}
```
